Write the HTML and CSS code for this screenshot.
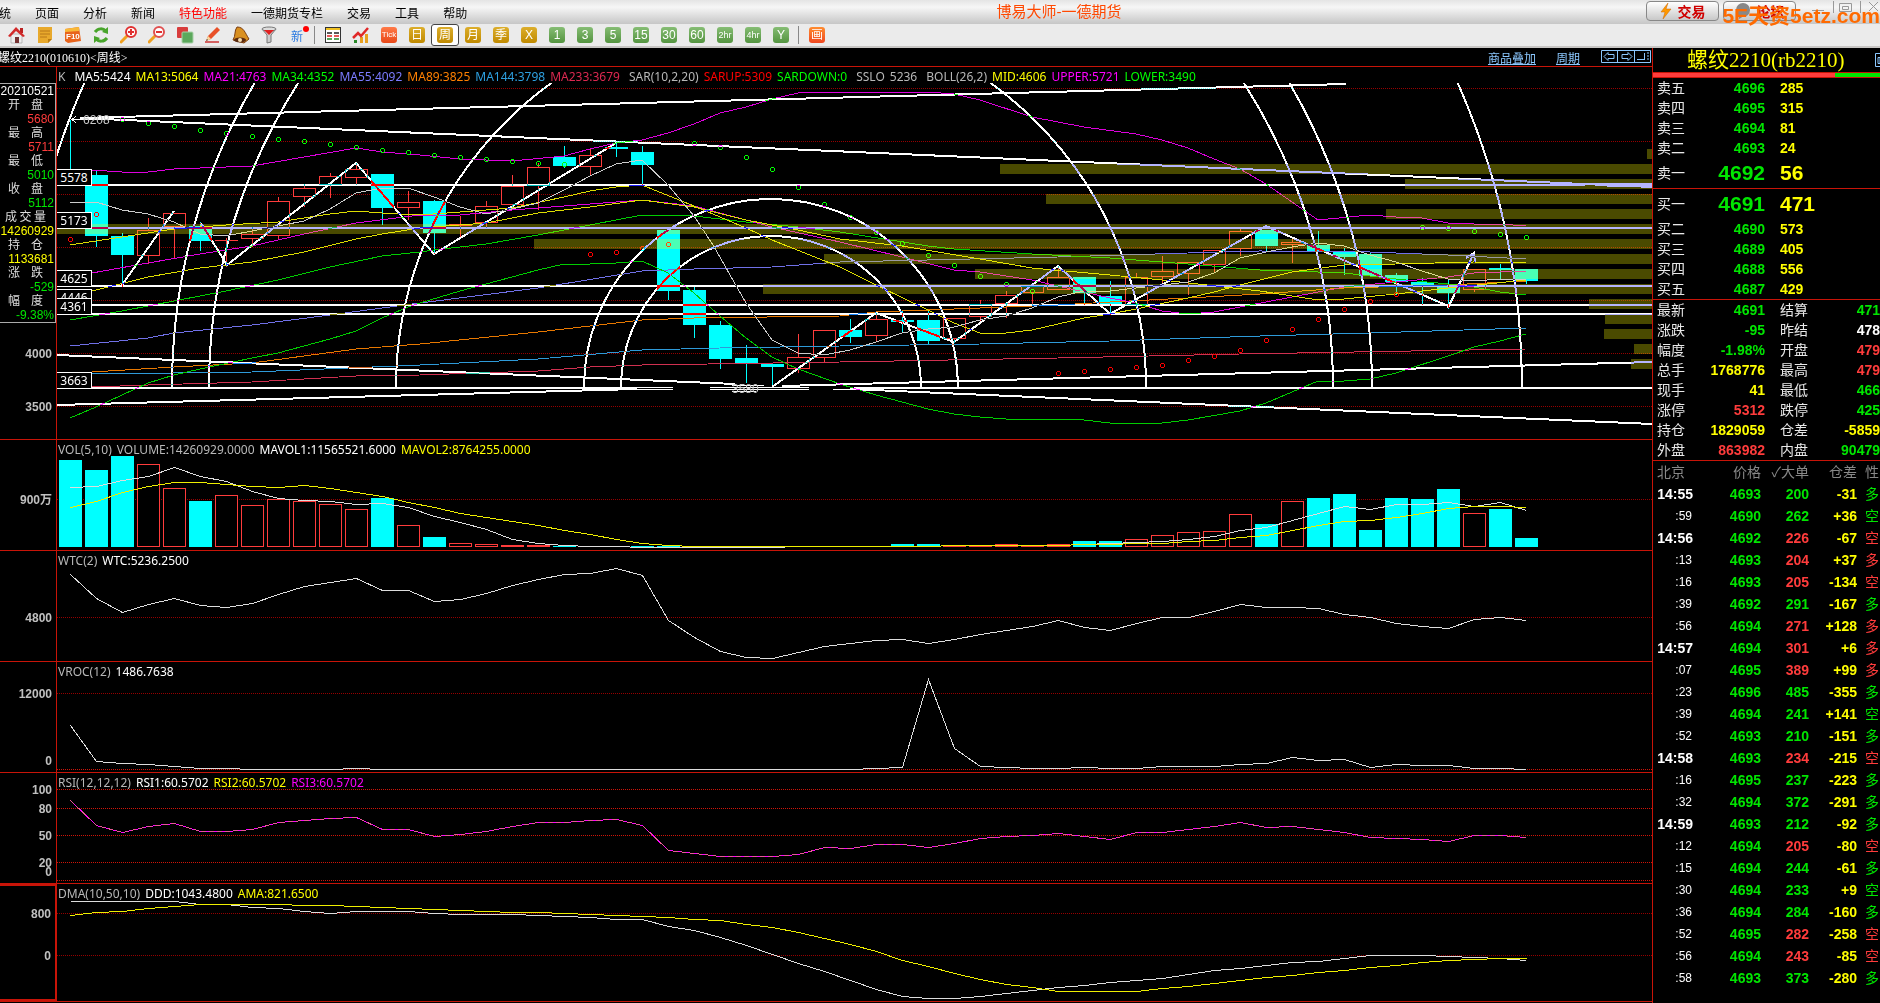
FILE: index.html
```html
<!DOCTYPE html>
<html lang="zh-CN">
<head>
  <meta charset="UTF-8">
  <meta name="viewport" content="width=device-width, initial-scale=1.0">
  <title>博易大师-一德期货</title>
  <link rel="stylesheet" href="styles.css">
</head>
<body>
<header class="menubar">
  <nav class="menu">
    <button>系统</button>
    <button>页面</button>
    <button>分析</button>
    <button>新闻</button>
    <button class="hot">特色功能</button>
    <button>一德期货专栏</button>
    <button>交易</button>
    <button>工具</button>
    <button>帮助</button>
  </nav>
  <div class="app-title">博易大师-一德期货</div>
  <div class="window-tools">
    <button class="trade-btn">
      <svg width="12" height="16" viewBox="0 0 12 16"><path d="M8 0L1 9h4l-2 7 8-10H6z" fill="#f90" stroke="#c60" stroke-width=".5"/></svg>
      交易
    </button>
    <button class="trade-btn">
      <svg width="16" height="16" viewBox="0 0 16 16"><circle cx="8" cy="7" r="7" fill="#888"/><path d="M4 12v4l5-3z" fill="#888"/></svg>
      论坛
    </button>
    <svg class="win-controls" width="80" height="22" viewBox="0 0 80 22" fill="none" stroke="#999">
      <path d="M12 9.500h12M39.500 2.500h12v8h-12zM42.500 5.500h6v3h-6zM69 1l9 9M78 1l-9 9M33.500 0v12M60.500 0v12"/>
    </svg>
    <div class="brand">5E天资5etz.com</div>
  </div>
</header>

<div class="toolbar">
  <button class="tool" title="首页"><svg width="18" height="18" viewBox="0 0 18 18"><path d="M3 8h11v9H3z" fill="#eee" stroke="#999" stroke-width=".6"/><path d="M12 2h3v5h-3z" fill="#b22"/><path d="M0 10L8 1l9 9-2 1-7-6-6 6z" fill="#d22a2a"/><path d="M7 11h4v6H7z" fill="#733"/></svg></button>
  <button class="tool" title="笔记"><svg width="18" height="18" viewBox="0 0 18 18"><path d="M2 1h14v12l-4 4H2z" fill="#e8a92c"/><path d="M12 17v-4h4z" fill="#b97a10"/><path d="M4 5h10M4 8h10M4 11h7" stroke="#b87818"/></svg></button>
  <button class="tool" title="F10"><svg width="18" height="18" viewBox="0 0 18 18"><path d="M1 3l14-2 2 14-13 2-3-2z" fill="#e8641c"/><path d="M1 3l14-2v4L1 6z" fill="#f8b838"/><text x="2" y="13" class="f10">F10</text></svg></button>
  <button class="tool" title="刷新"><svg width="18" height="18" viewBox="0 0 18 18" fill="none" stroke="#49a52c" stroke-width="3"><path d="M3 6c3-4 8-4 11-1M15 12c-3 4-8 4-11 1"/><path d="M16 1v7l-6-2zM2 17v-7l6 2z" fill="#49a52c" stroke="none"/></svg></button>
  <button class="tool" title="放大"><svg width="18" height="18" viewBox="0 0 18 18"><path d="M1 16l6-6" stroke="#f0a020" stroke-width="3" stroke-linecap="round"/><circle cx="11" cy="6" r="5" fill="#fff" stroke="#e03030" stroke-width="2"/><path d="M8 6h6M11 3v6" stroke="#e03030" stroke-width="2"/></svg></button>
  <button class="tool" title="缩小"><svg width="18" height="18" viewBox="0 0 18 18"><path d="M1 16l6-6" stroke="#f0a020" stroke-width="3" stroke-linecap="round"/><circle cx="11" cy="6" r="5" fill="#fff" stroke="#e05050" stroke-width="2"/><path d="M8 6h6" stroke="#e03030" stroke-width="2"/></svg></button>
  <button class="tool" title="叠加"><svg width="18" height="18" viewBox="0 0 18 18"><rect x="1" y="1" width="11" height="11" rx="1" fill="#d83c3c"/><rect x="6" y="6" width="11" height="11" rx="1" fill="#5ca85c" stroke="#a8d0a8"/></svg></button>
  <button class="tool" title="画线"><svg width="18" height="18" viewBox="0 0 18 18"><path d="M1 16h14" stroke="#c33" stroke-width="1.500"/><path d="M2 15l2-5 9-9 3 3-9 9z" fill="#e85028"/><path d="M2 15l2-5 3 3z" fill="#f8d8a0"/><path d="M2 15l1-2 1 1z" fill="#333"/></svg></button>
  <button class="tool" title="预警"><svg width="18" height="18" viewBox="0 0 18 18"><path d="M5 1c7 0 8 6 12 12l-5 4L1 14C4 9 2 5 5 1z" fill="#d99020" stroke="#7a3c10"/><ellipse cx="8" cy="14" rx="6" ry="2.500" fill="#5a2a10"/><circle cx="8" cy="14" r="2" fill="#f8e0b0"/></svg></button>
  <button class="tool" title="筛选"><svg width="18" height="18" viewBox="0 0 18 18"><path d="M2 3l5 6v8l4-1V9l5-6z" fill="#ccc" stroke="#777"/><ellipse cx="9" cy="3" rx="7" ry="2" fill="#ddd" stroke="#777"/><path d="M4 4h10L9 9z" fill="#e02020"/></svg></button>
  <button class="tool new-tool" title="新">新</button>
  <span class="sep"></span>
  <button class="tool" title="报价"><svg width="18" height="18" viewBox="0 0 18 18"><rect x="1.500" y="1.500" width="15" height="15" fill="#fff" stroke="#333"/><path d="M2 3h14" stroke="#f0c020" stroke-width="2"/><path d="M3 7h5M10 7h5" stroke="#222" stroke-width="1.500"/><path d="M3 10h5M10 10h5" stroke="#d22" stroke-width="1.500"/><path d="M3 13h5M10 13h5" stroke="#282" stroke-width="1.500"/></svg></button>
  <button class="tool" title="走势"><svg width="18" height="18" viewBox="0 0 18 18"><path d="M2 14h3v3H2z" fill="#2a8a2a"/><path d="M8 11h3v6H8z" fill="#e8a020"/><path d="M13 8h3v9h-3z" fill="#e8a020"/><path d="M1 12l5-5 3 3 7-8" fill="none" stroke="#e02828" stroke-width="2.500"/></svg></button>
  <button class="tool"><span class="chip tick">Tick</span></button>
  <button class="tool"><span class="chip gold">日</span></button>
  <button class="tool active"><span class="chip gold">周</span></button>
  <button class="tool"><span class="chip gold">月</span></button>
  <button class="tool"><span class="chip gold">季</span></button>
  <button class="tool"><span class="chip gold">X</span></button>
  <button class="tool"><span class="chip">1</span></button>
  <button class="tool"><span class="chip">3</span></button>
  <button class="tool"><span class="chip">5</span></button>
  <button class="tool"><span class="chip">15</span></button>
  <button class="tool"><span class="chip">30</span></button>
  <button class="tool"><span class="chip">60</span></button>
  <button class="tool"><span class="chip small">2hr</span></button>
  <button class="tool"><span class="chip small">4hr</span></button>
  <button class="tool"><span class="chip">Y</span></button>
  <span class="sep"></span>
  <button class="tool"><span class="chip draw">画</span></button>
</div>

<main class="workspace">
  <section class="charts">
    <div class="chart-head">
      <h1>螺纹2210(010610)&lt;周线&gt;</h1>
      <a href="#">商品叠加</a>
      <a href="#">周期</a>
      <svg width="52" height="16" viewBox="0 0 52 16" fill="none" stroke="#8cc8ff">
        <path d="M1.500 1.500h49v12h-49zM17.500 1v13M34.500 1v13"/>
        <path d="M4 7.500l4-4v2h6v4H8v2zM32 7.500l-4-4v2h-6v4h6v2zM37 10.500h7M44.500 4v7M47 4h2M47 7h2M47 10h2"/>
      </svg>
    </div>

    <div class="panel panel-main">
      <div class="axis" id="axisMain">
        <div class="info">
          <div class="date">20210521</div>
          <div class="k"><span>开</span><span>盘</span></div><div class="v up">5680</div>
          <div class="k"><span>最</span><span>高</span></div><div class="v up">5711</div>
          <div class="k"><span>最</span><span>低</span></div><div class="v down">5010</div>
          <div class="k"><span>收</span><span>盘</span></div><div class="v down">5112</div>
          <div class="k k3"><span>成</span><span>交</span><span>量</span></div><div class="v vol">14260929</div>
          <div class="k"><span>持</span><span>仓</span></div><div class="v vol">1133681</div>
          <div class="k"><span>涨</span><span>跌</span></div><div class="v down">-529</div>
          <div class="k"><span>幅</span><span>度</span></div><div class="v down">-9.38%</div>
        </div>
      </div>
      <div class="plot" id="plotMain">
        <svg id="main" viewBox="57 67 1595 372" preserveAspectRatio="none">
          <defs><clipPath id="fan"><rect x="57" y="83" width="1595" height="304"/></clipPath></defs>
          <g class="grid"><path d="M57 88.500H1652M57 141.500H1652M57 194.500H1652M57 247.500H1652M57 300.500H1652M57 353.500H1652M57 406.500H1652"/></g>
          <g id="candles"></g>
          <g class="lines">
            <polyline stroke="#d03050" points="92,387 148,385 252,382 356,376 420,375 538,371 590,367 642,365 840,362 1058,358 1240,354 1526,349"/>
            <polyline stroke="#2e9ad8" points="92,374 252,372 420,365 538,359 642,350 720,348 840,346 980,344 1110,341 1260,336 1370,333 1526,328"/>
            <polyline stroke="#e87800" points="92,372 174,367 252,363 304,356 356,349 420,344 538,332 590,326 642,320 694,318 840,316 876,312 980,308 1058,305 1110,302 1188,298 1260,294 1344,288 1448,285 1526,281"/>
            <polyline stroke="#7070e8" points="70,346 148,338 174,333 252,325 330,315 420,303 538,288 642,271 668,270 694,269 772,267 840,262 1058,257 1188,253 1260,251 1370,252 1448,255 1526,259"/>
            <polyline stroke="#0c0" points="70,320 122,311 174,301 226,291 278,280 330,267 382,256 420,252 434,250 486,244 538,235 590,225 642,215 668,215 694,216 746,222 798,227 840,232 928,246 954,249 1032,254 1110,258 1188,264 1260,270 1292,271 1344,273 1370,276 1396,279 1448,284 1474,287 1500,292 1526,295"/>
            <polyline stroke="#0c0" points="70,418 96,407 148,383 174,375 200,369 252,358 278,353 330,339 356,331 382,318 408,307 420,303 460,291 538,270 564,264 590,264 616,263 642,261 668,273 694,293 720,316 746,338 772,357 798,369 840,384 876,395 928,409 954,414 980,417 1006,419 1058,419 1084,420 1110,423 1162,423 1188,420 1240,411 1266,403 1318,381 1344,381 1370,379 1396,373 1448,356 1474,347 1500,341 1526,334"/>
            <polyline stroke="#d0d" points="92,273 148,263 200,254 252,246 304,234 356,223 420,215 460,215 512,210 564,206 642,200 694,206 720,213 772,227 840,242 902,257 954,270 980,272 1032,280 1084,292 1110,298 1136,303 1162,311 1188,314 1214,312 1240,307 1266,302 1344,287 1396,282 1448,277 1474,273 1526,271"/>
            <polyline stroke="#d0d" points="92,170 122,172 148,172 174,169 252,166 304,157 356,148 382,152 420,155 460,159 512,161 564,156 590,149 616,143 642,140 668,133 694,124 720,113 746,107 772,99 798,93 824,92 928,92 954,94 980,100 1032,117 1084,127 1136,134 1162,140 1188,148 1214,159 1240,169 1266,184 1318,220 1370,215 1396,217 1422,218 1448,223 1474,224 1500,224 1526,226"/>
            <polyline stroke="#dd0" points="92,291 148,277 200,268 252,262 304,252 356,239 382,234 420,228 486,223 538,213 590,207 642,200 694,207 746,220 798,230 840,239 902,246 980,259 1032,268 1110,275 1162,280 1260,291 1318,300 1344,299 1396,294 1448,288 1526,280"/>
            <polyline stroke="#dd0" points="70,245 122,237 174,229 226,225 278,222 330,214 356,211 382,213 420,215 460,212 512,208 564,197 590,191 616,187 642,185 694,206 746,228 772,240 840,267 880,287 928,310 954,323 980,333 1006,333 1032,330 1084,318 1110,314 1136,309 1188,298 1214,292 1240,285 1292,272 1344,265 1396,264 1474,262 1526,263"/>
            <polyline stroke="#ccc" points="70,202 96,202 122,210 148,214 174,222 200,234 226,236 252,231 278,226 304,221 330,209 356,193 382,188 408,188 434,197 460,207 486,214 512,209 538,203 564,190 590,176 616,164 642,160 668,185 694,216 713,245 746,303 772,340 798,353 824,355 850,350 876,342 902,333 928,329 954,327 980,320 1006,316 1032,308 1058,297 1084,291 1110,291 1136,288 1162,285 1188,282 1214,273 1240,258 1266,252 1292,247 1318,243 1344,246 1370,255 1396,262 1422,271 1448,279 1474,281 1500,279 1526,280"/>
          </g>
          <g id="sar"></g>
          <g id="profile"></g>
          <g class="drawing">
            <path d="M57 185H1585M1607 185H1652M57 228H1652M57 286H1652M57 305H1652M57 314H1652M57 388H637M854 388H1652"/>
            <path class="thin" d="M637 387.500H673M637 389.500H673M710 387.500H809M710 389.500H809M833 389.500H854M1585 183.500H1652M1607 186.500H1652"/>
            <path d="M80 118L1346 84M80 118L1652 187M57 355L735 384M850 389L1652 424M57 405L637 389M782 386L1652 362"/>
            <g clip-path="url(#fan)">
              <ellipse cx="771" cy="387" rx="187" ry="188"/>
              <ellipse cx="771" cy="387" rx="150" ry="151"/>
              <circle cx="771" cy="387" r="375"/>
              <circle cx="771" cy="387" r="562"/>
              <circle cx="772" cy="387" r="600"/>
              <circle cx="771" cy="387" r="751"/>
            </g>
            <path d="M122 285L174 211M201 223L227 265L356 163L434 254L616 143M772 387L876 313L954 342L1058 266L1110 314L1266 226L1448 306"/>
            <path d="M1448 308L1474 253M1466 258L1474 253L1475 262"/>
            <path class="thin" d="M72 119.500H110M76 116L72 119.500L76 123M732 385.500H764M732 391.500H756"/>
            <text x="83" y="124">6208</text>
            <text x="732" y="393">3580</text>
          </g>
        </svg>
        <div class="legend">
          <span class="gray">K</span><span class="white wide">MA5:5424</span><span class="yellow">MA13:5064</span><span class="magenta">MA21:4763</span><span class="green">MA34:4352</span><span class="violet">MA55:4092</span><span class="orange">MA89:3825</span><span class="blue">MA144:3798</span><span class="crimson">MA233:3679</span><span class="gray wide">SAR(10,2,20)</span><span class="red">SARUP:5309</span><span class="green">SARDOWN:0</span><span class="gray wide">SSLO</span><span class="gray">5236</span><span class="gray wide">BOLL(26,2)</span><span class="yellow">MID:4606</span><span class="magenta">UPPER:5721</span><span class="green">LOWER:3490</span>
        </div>
      </div>
    </div>

    <div class="panel">
      <div class="axis" id="axisVol"></div>
      <div class="plot">
        <svg id="vol" viewBox="57 440 1595 110" preserveAspectRatio="none"></svg>
        <div class="legend"><span class="gray">VOL(5,10)</span><span class="gray">VOLUME:14260929.0000</span><span class="white">MAVOL1:11565521.6000</span><span class="yellow">MAVOL2:8764255.0000</span></div>
      </div>
    </div>
    <div class="panel">
      <div class="axis" id="axisWtc"></div>
      <div class="plot">
        <svg id="wtc" viewBox="57 551 1595 110" preserveAspectRatio="none"></svg>
        <div class="legend"><span class="gray">WTC(2)</span><span class="white">WTC:5236.2500</span></div>
      </div>
    </div>
    <div class="panel">
      <div class="axis" id="axisVroc"></div>
      <div class="plot">
        <svg id="vroc" viewBox="57 662 1595 110" preserveAspectRatio="none"></svg>
        <div class="legend"><span class="gray">VROC(12)</span><span class="white">1486.7638</span></div>
      </div>
    </div>
    <div class="panel">
      <div class="axis" id="axisRsi"></div>
      <div class="plot">
        <svg id="rsi" viewBox="57 773 1595 110" preserveAspectRatio="none"></svg>
        <div class="legend"><span class="gray">RSI(12,12,12)</span><span class="white">RSI1:60.5702</span><span class="yellow">RSI2:60.5702</span><span class="magenta">RSI3:60.5702</span></div>
      </div>
    </div>
    <div class="panel selected">
      <div class="axis" id="axisDma"></div>
      <div class="plot">
        <svg id="dma" viewBox="57 884 1595 117" preserveAspectRatio="none"></svg>
        <div class="legend"><span class="gray">DMA(10,50,10)</span><span class="white">DDD:1043.4800</span><span class="yellow">AMA:821.6500</span></div>
      </div>
    </div>
  </section>

  <aside class="quote">
    <div class="quote-head">
      <h2>螺纹2210(rb2210)</h2>
      <svg width="5" height="14" viewBox="0 0 5 14" fill="none" stroke="#8cc8ff"><path d="M5 .5H.5v13H5M3 4.500h2v6H3z"/></svg>
    </div>
    <div class="ratio"><i></i></div>
    <table class="depth">
      <tr><th>卖五</th><td class="g">4696</td><td class="y">285</td></tr>
      <tr><th>卖四</th><td class="g">4695</td><td class="y">315</td></tr>
      <tr><th>卖三</th><td class="g">4694</td><td class="y">81</td></tr>
      <tr><th>卖二</th><td class="g">4693</td><td class="y">24</td></tr>
      <tr class="best"><th>卖一</th><td class="g">4692</td><td class="y">56</td></tr>
    </table>
    <table class="depth">
      <tr class="best"><th>买一</th><td class="g">4691</td><td class="y">471</td></tr>
      <tr><th>买二</th><td class="g">4690</td><td class="y">573</td></tr>
      <tr><th>买三</th><td class="g">4689</td><td class="y">405</td></tr>
      <tr><th>买四</th><td class="g">4688</td><td class="y">556</td></tr>
      <tr><th>买五</th><td class="g">4687</td><td class="y">429</td></tr>
    </table>
    <table class="stats">
      <tr><th>最新</th><td class="g">4691</td><th>结算</th><td class="g">471</td></tr>
      <tr><th>涨跌</th><td class="g">-95</td><th>昨结</th><td>478</td></tr>
      <tr><th>幅度</th><td class="g">-1.98%</td><th>开盘</th><td class="r">479</td></tr>
      <tr><th>总手</th><td class="y">1768776</td><th>最高</th><td class="r">479</td></tr>
      <tr><th>现手</th><td class="y">41</td><th>最低</th><td class="g">466</td></tr>
      <tr><th>涨停</th><td class="r">5312</td><th>跌停</th><td class="g">425</td></tr>
      <tr><th>持仓</th><td class="y">1829059</td><th>仓差</th><td class="y">-5859</td></tr>
      <tr><th>外盘</th><td class="r">863982</td><th>内盘</th><td class="g">90479</td></tr>
    </table>
    <table class="ticks">
      <thead><tr><th>北京</th><th>价格</th><th>✓大单</th><th>仓差</th><th>性</th></tr></thead>
      <tbody>
      <tr><td class="min">14:55</td><td>4693</td><td class="g">200</td><td>-31</td><td class="g">多</td></tr>
      <tr><td>:59</td><td>4690</td><td class="g">262</td><td>+36</td><td class="g">空</td></tr>
      <tr><td class="min">14:56</td><td>4692</td><td class="r">226</td><td>-67</td><td class="r">空</td></tr>
      <tr><td>:13</td><td>4693</td><td class="r">204</td><td>+37</td><td class="r">多</td></tr>
      <tr><td>:16</td><td>4693</td><td class="r">205</td><td>-134</td><td class="r">空</td></tr>
      <tr><td>:39</td><td>4692</td><td class="g">291</td><td>-167</td><td class="g">多</td></tr>
      <tr><td>:56</td><td>4694</td><td class="r">271</td><td>+128</td><td class="r">多</td></tr>
      <tr><td class="min">14:57</td><td>4694</td><td class="r">301</td><td>+6</td><td class="r">多</td></tr>
      <tr><td>:07</td><td>4695</td><td class="r">389</td><td>+99</td><td class="r">多</td></tr>
      <tr><td>:23</td><td>4696</td><td class="g">485</td><td>-355</td><td class="g">多</td></tr>
      <tr><td>:39</td><td>4694</td><td class="g">241</td><td>+141</td><td class="g">空</td></tr>
      <tr><td>:52</td><td>4693</td><td class="g">210</td><td>-151</td><td class="g">多</td></tr>
      <tr><td class="min">14:58</td><td>4693</td><td class="r">234</td><td>-215</td><td class="r">空</td></tr>
      <tr><td>:16</td><td>4695</td><td class="g">237</td><td>-223</td><td class="g">多</td></tr>
      <tr><td>:32</td><td>4694</td><td class="g">372</td><td>-291</td><td class="g">多</td></tr>
      <tr><td class="min">14:59</td><td>4693</td><td class="g">212</td><td>-92</td><td class="g">多</td></tr>
      <tr><td>:12</td><td>4694</td><td class="r">205</td><td>-80</td><td class="r">空</td></tr>
      <tr><td>:15</td><td>4694</td><td class="g">244</td><td>-61</td><td class="g">多</td></tr>
      <tr><td>:30</td><td>4694</td><td class="g">233</td><td>+9</td><td class="g">空</td></tr>
      <tr><td>:36</td><td>4694</td><td class="g">284</td><td>-160</td><td class="g">多</td></tr>
      <tr><td>:52</td><td>4695</td><td class="r">282</td><td>-258</td><td class="r">空</td></tr>
      <tr><td>:56</td><td>4694</td><td class="r">243</td><td>-85</td><td class="r">空</td></tr>
      <tr><td>:58</td><td>4693</td><td class="g">373</td><td>-280</td><td class="g">多</td></tr>
      </tbody>
    </table>
  </aside>
</main>
<script src="chart.js"></script>
</body>
</html>
```
FILE: styles.css
```css
* {
  box-sizing: border-box;
}
body {
  margin: 0;
  height: 100vh;
  display: flex;
  flex-direction: column;
  overflow: hidden;
  background-color: #000;
  color: #fff;
  font-family: "Liberation Sans", "Noto Sans CJK SC", sans-serif;
  font-size: 12px;
}
button {
  border: none;
  background: none;
  padding: 0;
  font-family: inherit;
  font-size: 12px;
  color: #000;
  cursor: pointer;
  white-space: nowrap;
}
svg {
  display: block;
}

/* menu */
.menubar {
  position: relative;
  flex: none;
  height: 24px;
  display: flex;
  align-items: center;
  background: linear-gradient(#e4e4e4, #f6f6f6 30%, #c6c6c6);
}
.menu {
  display: flex;
  gap: 24px;
  margin-left: -13px;
}
.menu .hot {
  color: #f00;
}
.app-title {
  position: absolute;
  left: 0;
  right: 0;
  padding-left: 238px;
  text-align: center;
  font-size: 15px;
  line-height: 22px;
  color: #ff4800;
  pointer-events: none;
}
.window-tools {
  position: relative;
  margin-left: auto;
  display: flex;
  gap: 4px;
  height: 22px;
}
.trade-btn {
  width: 73px;
  height: 20px;
  display: flex;
  align-items: center;
  justify-content: center;
  gap: 6px;
  border: 1px solid #888;
  border-radius: 4px;
  background: linear-gradient(#fff, #c8c8c8);
  color: #d00000;
  font-size: 14px;
  font-weight: bold;
}
.brand {
  position: absolute;
  right: 0;
  top: 4px;
  font-size: 21px;
  line-height: 22px;
  font-weight: bold;
  color: #ff6a00;
  white-space: nowrap;
}

/* toolbar */
.toolbar {
  flex: none;
  height: 24px;
  display: flex;
  align-items: center;
  padding-left: 3px;
  background-color: #ebebeb;
  border-bottom: 2px solid #c8c6c4;
}
.tool {
  position: relative;
  width: 28px;
  height: 22px;
  display: flex;
  align-items: center;
  justify-content: center;
}
.tool.active {
  border: 1px solid #444;
  border-radius: 3px;
  background-color: #fff;
}
.f10 {
  font-size: 8px;
  font-weight: bold;
  fill: #fff;
}
.new-tool {
  color: #2a7ae0;
}
.new-tool::after {
  content: "";
  position: absolute;
  right: 2px;
  top: 2px;
  width: 6px;
  height: 6px;
  border-radius: 3px;
  background-color: #f00;
}
.sep {
  width: 1px;
  height: 18px;
  margin: 0 4px 0 3px;
  background-color: #888;
}
.chip {
  width: 16px;
  height: 16px;
  border-radius: 3px;
  background: linear-gradient(#86bd74, #549440);
  color: #fff;
  font-size: 12px;
  line-height: 16px;
  text-align: center;
}
.chip.gold {
  background: linear-gradient(#dcae2c, #c08a00);
}
.chip.tick {
  background: linear-gradient(#ff7a48, #e84818);
  font-size: 8px;
}
.chip.small {
  font-size: 9px;
}
.chip.draw {
  background: linear-gradient(#ff8c30, #f04820);
}

/* charts */
.workspace {
  flex: 1;
  min-height: 0;
  display: flex;
}
.charts {
  flex: 1;
  min-width: 0;
  display: grid;
  grid-template-rows: 19px 373fr 111fr 111fr 111fr 111fr 118fr;
  padding-bottom: 1px;
  border-right: 1px solid #c81408;
}
.chart-head {
  display: flex;
  align-items: center;
  border-bottom: 1px solid #c81408;
  overflow: hidden;
}
.chart-head h1 {
  margin: 0 auto 0 -2px;
  font-family: "Liberation Serif", "Noto Sans CJK SC", serif;
  font-size: 12px;
  font-weight: normal;
}
.chart-head a {
  margin-right: 20px;
  color: #8cc8ff;
}
.panel {
  min-height: 0;
  display: flex;
  border-bottom: 1px solid #c81408;
}
.axis {
  position: relative;
  flex: none;
  width: 57px;
  border-right: 1px solid #c81408;
}
.selected .axis {
  border: 2px solid #c81408;
  border-left: none;
}
.axis-label {
  position: absolute;
  right: 4px;
  margin-top: -7px;
  line-height: 16px;
  font-weight: bold;
  color: #c0c0c0;
}
.plot {
  position: relative;
  flex: 1;
  min-width: 0;
}
.plot svg {
  position: absolute;
  width: 100%;
  height: 100%;
  shape-rendering: crispEdges;
}
.legend {
  position: relative;
  display: flex;
  gap: 5px;
  padding-left: 1px;
  font-family: "Noto Sans", "DejaVu Sans Condensed", sans-serif;
  line-height: 20px;
  white-space: nowrap;
}
.legend .wide {
  margin-left: 4px;
}
.tag {
  position: absolute;
  left: 0;
  width: 35px;
  height: 17px;
  margin-top: -17px;
  border: 1px solid #fff;
  border-left: none;
  background-color: #000;
  font-family: "Noto Sans", "DejaVu Sans Condensed", sans-serif;
  line-height: 15px;
  text-align: center;
}

.info {
  margin-top: 16px;
  border: 1px solid #aaa;
  border-left: none;
  line-height: 14px;
  background-color: #000;
}
.info .date,
.info .v {
  display: flex;
  justify-content: flex-end;
  padding-right: 1px;
}
.info .k {
  display: flex;
  justify-content: space-between;
  padding: 0 12px 0 8px;
  color: #ddd;
}
.info .k3 {
  padding: 0 9px 0 5px;
}
.up { color: #ff3c3c; }
.down { color: #00e600; }
.vol { color: #ff0; }

.gray { color: #b8b8b8; }
.white { color: #fff; }
.yellow { color: #ff0; }
.magenta { color: #f0f; }
.green { color: #0f0; }
.violet { color: #7b7bff; }
.orange { color: #ff8000; }
.blue { color: #2ea0e0; }
.crimson { color: #dc2850; }
.red { color: #f00; }

.grid path {
  stroke: #960000;
  stroke-dasharray: 1 1;
}
.grid.bright path {
  stroke: #d01408;
}
.lines polyline,
.sar {
  fill: none;
}
.bar-down {
  fill: #0ff;
}
.bar-up {
  fill: #000;
  stroke: #ff3c3c;
}
.wick-down { stroke: #0ff; }
.wick-up { stroke: #ff3c3c; }
.band {
  fill: #ff0;
  fill-opacity: 0.29;
}
.drawing {
  fill: none;
  stroke: #fff;
  stroke-width: 2;
  mix-blend-mode: difference;
}
.drawing .thin {
  stroke-width: 1;
}
.drawing text {
  fill: #ccc;
  stroke: none;
  font-size: 12px;
}

/* quote panel */
.quote {
  flex: none;
  width: 227px;
  overflow: hidden;
}
.quote-head {
  height: 24px;
  display: flex;
  align-items: center;
  justify-content: space-between;
  padding-left: 34px;
}
.quote-head h2 {
  margin: 0;
  font-family: "Liberation Serif", "Noto Sans CJK SC", serif;
  font-size: 21px;
  font-weight: normal;
  line-height: 24px;
  color: #ff0;
}
.ratio {
  height: 6px;
  border: solid #c81408;
  border-width: 1px 0;
  background-color: #00e600;
}
.ratio i {
  display: block;
  width: 80%;
  height: 4px;
  background-color: #ff3c3c;
}
.quote table {
  width: 100%;
  table-layout: fixed;
  border-collapse: separate;
  border-spacing: 0;
  line-height: 20px;
}
.depth,
.stats {
  border-bottom: 1px solid #c81408;
}
.quote th,
.quote td {
  padding: 0;
  height: 20px;
  font-size: 14px;
  white-space: nowrap;
}
.quote th {
  font-weight: normal;
  text-align: left;
  padding-left: 4px;
  color: #e8e8e8;
}
.quote td {
  font-weight: bold;
  text-align: right;
}
.depth th:first-child,
.stats th:first-child {
  width: 48px;
}
.depth td:nth-child(2),
.stats td:nth-child(2) {
  width: 64px;
}
.depth td:last-child {
  padding-left: 15px;
  text-align: left;
}
.quote .best th,
.quote .best td {
  height: 30px;
}
.quote .best td {
  font-size: 21px;
}
.stats th:nth-child(3) {
  width: 60px;
  padding-left: 15px;
}
.quote .ticks th,
.quote .ticks td {
  height: 22px;
}
.quote .ticks th {
  padding: 0;
  text-align: right;
  color: #888;
}
.quote .ticks th:first-child {
  width: 40px;
  padding-left: 4px;
  text-align: left;
}
.ticks th:nth-child(2) { width: 68px; }
.ticks th:nth-child(3),
.ticks th:nth-child(4) { width: 48px; }
.quote .ticks td:first-child {
  padding-right: 1px;
  font-size: 12px;
  font-weight: normal;
}
.quote .ticks td.min {
  padding-right: 0;
  font-size: 14px;
  font-weight: bold;
}
.ticks td:nth-child(2) { color: #00e600; }
.ticks td:nth-child(4) { color: #ff0; }
.quote .ticks th:last-child,
.quote .ticks td:last-child {
  padding-left: 8px;
  text-align: left;
  font-weight: normal;
}
.g { color: #00e600; }
.r { color: #ff3c3c; }
.y { color: #ff0; }
```
FILE: chart.js
```js
const NS = 'http://www.w3.org/2000/svg';
const STEP = 26;

function add(parent, name, attrs) {
  const el = document.createElementNS(NS, name);
  for (const key in attrs) el.setAttribute(key, attrs[key]);
  parent.appendChild(el);
  return el;
}

function x(i) {
  return 70 + i * STEP;
}

// high, open/close top, open/close bottom, low, u = up d = down
const candles = [
  [120,169,184,184,'d'],[171,175,236,247,'d'],[233,236,255,287,'d'],[218,230,256,264,'u'],[213,213,227,258,'u'],
  [222,226,241,251,'d'],[238,240,240,267,'u'],[227,234,239,247,'u'],[197,201,236,240,'u'],[184,188,197,207,'u'],
  [173,176,185,198,'u'],[163,169,178,185,'u'],[174,174,208,225,'d'],[191,202,208,220,'u'],[200,201,233,254,'d'],
  [216,224,226,237,'u'],[201,206,223,228,'u'],[175,186,205,208,'u'],[163,167,186,210,'u'],[146,157,166,168,'d'],
  [149,155,167,176,'u'],[143,147,149,157,'d'],[146,152,165,185,'d'],[230,230,291,300,'d'],[287,290,325,338,'d'],
  [321,325,359,369,'d'],[345,358,363,383,'d'],[363,364,367,385,'d'],[334,357,369,373,'u'],[330,330,358,363,'u'],
  [319,330,337,343,'d'],[313,319,336,341,'u'],[311,320,322,332,'d'],[311,320,341,344,'d'],[318,318,339,343,'u'],
  [300,304,317,321,'u'],[291,295,304,318,'u'],[286,286,293,305,'u'],[266,277,290,290,'u'],[277,277,293,305,'d'],
  [281,296,304,315,'d'],[273,277,305,307,'u'],[256,271,277,283,'u'],[262,262,274,295,'u'],[250,250,265,272,'u'],
  [229,231,249,256,'u'],[230,230,246,251,'d'],[239,242,245,263,'u'],[231,245,252,252,'d'],[248,251,257,275,'d'],
  [252,254,276,277,'d'],[273,275,282,295,'d'],[278,282,285,305,'d'],[279,287,293,309,'d'],[269,269,290,292,'u'],
  [264,268,270,279,'d'],[269,269,281,284,'d']
];

function bar(parent, i, top, bottom, dir) {
  if (dir === 'd') {
    add(parent, 'rect', {x: x(i) - 11, y: top, width: 23, height: bottom - top, class: 'bar-down'});
  } else {
    add(parent, 'rect', {x: x(i) - 10.5, y: top + 0.5, width: 22, height: Math.max(bottom - top - 1, 0.1), class: 'bar-up'});
  }
}

const candleGroup = document.getElementById('candles');
candles.forEach(function (c, i) {
  add(candleGroup, 'path', {
    d: 'M' + (x(i) + 0.5) + ' ' + c[0] + 'V' + c[3],
    class: c[4] === 'd' ? 'wick-down' : 'wick-up'
  });
  if (i > 0) bar(candleGroup, i, c[1], c[2], c[4]);
});

// parabolic stops, negative = below price (red)
const sar = [-239,-214,119,123,126,130,133,136,139,141,144,147,150,152,155,157,159,161,163,164,-254,-252,-248,-244,
  143,147,157,169,187,204,217,232,243,255,265,276,284,291,-373,-371,-369,-367,-365,-360,-356,-350,-340,-329,-319,
  -309,-301,-294,227,228,231,234,237];
sar.forEach(function (v, i) {
  add(document.getElementById('sar'), 'circle', {
    cx: x(i) + 0.5, cy: Math.abs(v) + 0.5, r: 2, class: 'sar', stroke: v < 0 ? '#f00' : '#0f0'
  });
});

// volume profile, one band every 15px starting at the top price
[1647,1000,1405,1046,1386,57,534,824,975,763,1589,1605,1604,1634,1631].forEach(function (left, i) {
  add(document.getElementById('profile'), 'rect', {x: left, y: 149 + i * 15, width: 1652 - left, height: 10, class: 'band'});
});

[5578, 5173, 4625, 4446, 4361, 3663].forEach(function (price) {
  const tag = document.createElement('div');
  const y = 353 - (price - 4000) * 0.106;
  tag.className = 'tag';
  tag.textContent = price;
  tag.style.top = (Math.round(y) - 67) / 3.72 + '%';
  document.getElementById('plotMain').appendChild(tag);
});

function axis(id, top, height, labels) {
  labels.forEach(function (l) {
    const el = document.createElement('div');
    el.className = 'axis-label';
    el.textContent = l[0];
    el.style.top = (l[1] - top) / height * 100 + '%';
    document.getElementById(id).appendChild(el);
  });
}
axis('axisMain', 67, 372, [['4000', 353], ['3500', 406]]);
axis('axisVol', 440, 110, [['900万', 499]]);
axis('axisWtc', 551, 110, [['4800', 617]]);
axis('axisVroc', 662, 110, [['12000', 693], ['0', 760]]);
axis('axisRsi', 773, 110, [['100', 789], ['80', 808], ['50', 835], ['20', 862], ['0', 871]]);
axis('axisDma', 886, 113, [['800', 913], ['0', 955]]);

function grid(id, ys, bright) {
  const g = add(document.getElementById(id), 'g', {class: bright ? 'grid bright' : 'grid'});
  ys.forEach(function (y) {
    add(g, 'path', {d: 'M57 ' + (y + 0.5) + 'H1652'});
  });
}

function line(id, color, ys, dash) {
  const g = add(document.getElementById(id), 'g', {class: 'lines'});
  const points = ys.map(function (y, i) { return (x(i) + 0.5) + ',' + (y + 0.5); }).join(' ');
  const attrs = {points: points, stroke: color};
  if (dash) attrs['stroke-dasharray'] = dash;
  add(g, 'polyline', attrs);
}

grid('vol', [499]);
const volume = [460,470,456,464,488,501,495,505,499,501,504,509,498,525,537,543,544,545,545,546,546,546,546,546,546,
  546,546,546,546,546,546,546,544,544,545,545,544,545,544,541,541,539,535,532,531,514,524,501,498,494,530,498,499,489,
  513,509,538];
const downBars = [0,1,2,5,12,14,19,21,22,23,24,25,26,27,30,32,33,39,40,46,48,49,50,51,52,53,55,56];
volume.forEach(function (top, i) {
  bar(document.getElementById('vol'), i, top, 547, downBars.includes(i) ? 'd' : 'u');
});
line('vol', '#ddd', [487,486,480,476,467,476,481,491,498,500,501,504,503,507,516,522,529,539,543,545,546,546,547,547,
  547,547,547,547,546,546,546,546,546,546,545,545,545,545,545,544,543,542,541,539,536,530,527,520,513,506,509,504,504,
  502,506,502,510]);
line('vol', '#ee0', [507,501,492,486,482,482,484,486,487,485,488,492,496,502,507,513,517,521,525,530,534,539,543,545,
  546,546,546,546,546,546,546,546,546,546,545,545,545,545,545,544,544,543,543,541,540,537,535,530,525,521,520,517,513,
  508,506,506,507]);

grid('wtc', [617]);
line('wtc', '#ddd', [574,598,612,604,598,605,607,603,594,586,582,578,590,590,601,599,593,585,579,574,573,568,575,620,
  637,651,657,658,652,646,643,640,639,643,639,634,630,626,620,627,630,623,617,617,611,604,607,607,608,614,617,623,626,
  628,619,617,620]);

grid('vroc', [693]);
grid('vroc', [769], true);
line('vroc', '#ddd', [725,761,763,764,766,768,768,769,769,769,769,768,769,769,769,769,769,769,769,769,769,769,769,769,
  769,769,769,769,769,769,769,768,767,679,748,766,767,768,768,767,768,768,766,766,766,764,763,757,760,759,767,764,765,
  765,768,768,769]);

grid('rsi', [789, 808, 835, 862, 880], true);
const rsi = [800,825,832,826,823,831,831,829,822,820,818,817,829,829,836,834,831,826,822,822,820,819,825,850,853,856,
  856,856,854,847,848,844,844,847,843,838,836,835,833,836,839,832,832,829,826,822,827,826,829,832,837,838,839,841,835,
  835,837];
line('rsi', '#f0f', rsi);
line('rsi', '#e65a96', rsi, '5 3');

grid('dma', [913, 955]);
line('dma', '#ddd', [901,901,901,901,901,904,904,907,908,911,913,911,911,911,913,914,914,914,915,916,917,919,919,926,
  930,937,945,954,963,971,980,989,996,998,998,996,993,990,987,985,982,980,978,974,970,968,965,962,961,958,955,955,955,
  956,957,958,960]);
line('dma', '#ee0', [915,912,911,908,906,904,904,904,904,905,905,906,907,908,909,910,911,912,912,913,914,915,916,917,
  919,920,924,927,932,938,944,951,960,966,973,979,984,987,991,991,991,991,988,986,983,980,977,975,972,970,967,965,962,
  960,959,958,958]);
```
